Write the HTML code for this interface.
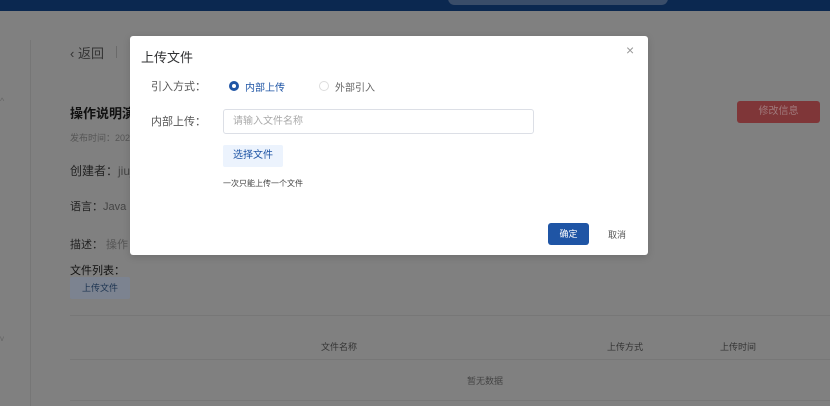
<!DOCTYPE html>
<html><head><meta charset="utf-8"><style>
*{margin:0;padding:0;box-sizing:border-box}
body{width:830px;height:406px;overflow:hidden;background:#808080;font-family:"Liberation Sans","Noto Sans CJK SC",sans-serif;position:relative;color:#333}
.a{position:absolute;white-space:nowrap}
</style></head><body>
<div class="a" style="left:0;top:0;width:830px;height:11px;background:#0b2850"></div>
<div class="a" style="left:448px;top:-8px;width:220px;height:13px;border-radius:8px;background:#3a4d69"></div>
<div class="a" style="left:30px;top:40px;width:1px;height:366px;background:#767676"></div>
<div class="a" style="left:0;top:96px;font-size:9px;color:#666">^</div>
<div class="a" style="left:0;top:334px;font-size:8px;color:#666">v</div>
<div class="a" style="left:70px;top:43px;font-size:13px;color:#333">‹ 返回</div>
<div class="a" style="left:116px;top:46px;width:1px;height:12px;background:#6a6a6a"></div>
<div class="a" style="left:70px;top:103px;font-size:13px;font-weight:bold;color:#111">操作说明演</div>
<div class="a" style="left:70px;top:131px;font-size:9px;color:#555">发布时间：202</div>
<div class="a" style="left:70px;top:162px;font-size:12px;color:#222">创建者：<span style="color:#444">jiuj</span></div>
<div class="a" style="left:70px;top:198px;font-size:11px;color:#222">语言：<span style="color:#444">Java</span></div>
<div class="a" style="left:70px;top:236px;font-size:11px;color:#222">描述：<span style="color:#555"> 操作</span></div>
<div class="a" style="left:70px;top:262px;font-size:11px;color:#111">文件列表：</div>
<div class="a" style="left:70px;top:277px;width:60px;height:22px;background:#7c8390;border-radius:2px;font-size:9px;color:#1b3350;text-align:center;line-height:22px">上传文件</div>
<div class="a" style="left:70px;top:315px;width:760px;height:1px;background:#777"></div>
<div class="a" style="left:321px;top:340px;font-size:9px;color:#333">文件名称</div>
<div class="a" style="left:607px;top:340px;font-size:9px;color:#333">上传方式</div>
<div class="a" style="left:720px;top:340px;font-size:9px;color:#333">上传时间</div>
<div class="a" style="left:70px;top:359px;width:760px;height:1px;background:#777"></div>
<div class="a" style="left:467px;top:374px;font-size:9px;color:#444">暂无数据</div>
<div class="a" style="left:70px;top:400px;width:760px;height:1px;background:#777"></div>
<div class="a" style="left:737px;top:101px;width:83px;height:22px;background:#7f3638;border-radius:3px;font-size:10px;color:#a07a7c;text-align:center;line-height:22px">修改信息</div>

<div class="a" style="left:130px;top:36px;width:518px;height:219px;background:#fff;border-radius:3px;box-shadow:0 2px 8px rgba(0,0,0,.15)">
 <div class="a" style="left:11px;top:11px;font-size:13px;color:#303133">上传文件</div>
 <div class="a" style="left:496px;top:6px;font-size:14px;color:#999">×</div>
 <div class="a" style="left:21px;top:42px;font-size:11px;color:#555">引入方式：</div>
 <div class="a" style="left:99px;top:45px;width:10px;height:10px;border-radius:50%;background:#1f55a5"><div class="a" style="left:3px;top:3px;width:4px;height:4px;border-radius:50%;background:#fff"></div></div>
 <div class="a" style="left:115px;top:43px;font-size:10px;color:#1f55a5">内部上传</div>
 <div class="a" style="left:189px;top:45px;width:10px;height:10px;border-radius:50%;border:1px solid #ddd"></div>
 <div class="a" style="left:205px;top:43px;font-size:10px;color:#666">外部引入</div>
 <div class="a" style="left:21px;top:77px;font-size:11px;color:#555">内部上传：</div>
 <div class="a" style="left:93px;top:73px;width:311px;height:25px;border:1px solid #dcdfe6;border-radius:3px;font-size:10px;color:#aaa;line-height:23px;padding-left:9px">请输入文件名称</div>
 <div class="a" style="left:93px;top:109px;width:60px;height:22px;background:#ecf3fd;border-radius:2px;font-size:10px;color:#1f55a5;text-align:center;line-height:22px">选择文件</div>
 <div class="a" style="left:93px;top:142px;font-size:8px;color:#444">一次只能上传一个文件</div>
 <div class="a" style="left:418px;top:187px;width:41px;height:22px;background:#1f55a5;border-radius:3px;font-size:9px;color:#fff;text-align:center;line-height:22px">确定</div>
 <div class="a" style="left:478px;top:192px;font-size:9px;color:#555">取消</div>
</div>
</body></html>
